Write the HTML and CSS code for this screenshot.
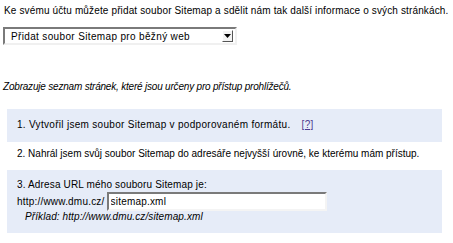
FILE: index.html
```html
<!DOCTYPE html>
<html>
<head>
<meta charset="utf-8">
<link rel="stylesheet" href="styles.css">
</head>
<body>
<p class="intro">Ke svému účtu můžete přidat soubor Sitemap a sdělit nám tak další informace o svých stránkách.</p>
<div class="select-wrap">
  <select class="select">
    <option>Přidat soubor Sitemap pro běžný web</option>
  </select>
  <span class="select-btn"><svg width="7" height="4" viewBox="0 0 7 4"><path d="M0 0H7L3.5 4Z" fill="#000"/></svg></span>
</div>
<p class="desc">Zobrazuje seznam stránek, které jsou určeny pro přístup prohlížečů.</p>
<div class="steps">
  <div class="step step-blue step-first">1. Vytvořil jsem soubor Sitemap v podporovaném formátu. <a class="help" href="#">[?]</a></div>
  <div class="step step-white">2. Nahrál jsem svůj soubor Sitemap do adresáře nejvyšší úrovně, ke kterému mám přístup.</div>
  <div class="step step-blue step-last">
    <div class="step-title">3. Adresa URL mého souboru Sitemap je:</div>
    <div class="url-row"><span class="url-prefix">http://www.dmu.cz/</span><input class="url-input" type="text" value="sitemap.xml"></div>
    <div class="example">Příklad: http://www.dmu.cz/sitemap.xml</div>
  </div>
</div>
</body>
</html>
```
FILE: styles.css
```css
html, body {
  margin: 0;
  padding: 0;
  background: #fff;
}
body {
  font-family: "Liberation Sans", Arial, sans-serif;
  font-size: 10px;
  color: #000;
  padding: 4px 0 0 4px;
  white-space: nowrap;
}
.intro {
  margin: 0;
  line-height: 14px;
  letter-spacing: 0.14px;
}
.select-wrap {
  position: relative;
  width: 234px;
  height: 18px;
  margin: 9px 0 0 -1px;
}
.select {
  appearance: none;
  -webkit-appearance: none;
  display: block;
  width: 234px;
  height: 18px;
  margin: 0;
  padding: 0 0 0 6px;
  font-family: "Liberation Sans", Arial, sans-serif;
  font-size: 10px;
  letter-spacing: 0.35px;
  color: #000;
  background: #fff;
  border: 2px solid;
  border-color: #7a7a7a #f0f0f0 #f0f0f0 #7a7a7a;
  border-radius: 0;
  outline: none;
}
.select-btn {
  position: absolute;
  right: 4px;
  top: 3px;
  width: 11px;
  height: 12px;
  box-sizing: border-box;
  background: #f3f3f3;
  border: 1px solid;
  border-color: #fff #555 #555 #fff;
  display: flex;
  align-items: center;
  justify-content: center;
}
.select-btn svg {
  display: block;
}
.desc {
  margin: 35px 0 0 -1px;
  font-style: italic;
  line-height: 14px;
  letter-spacing: -0.2px;
}
.steps {
  margin: 15px 0 0 3px;
  width: 435px;
}
.step {
  padding: 0 10px;
  line-height: 14px;
}
.step-blue {
  background: #e6ecf8;
}
.step-white {
  background: #fff;
}
.step-first {
  padding-top: 9px;
  padding-bottom: 10px;
  letter-spacing: 0.3px;
}
.step-white {
  padding-top: 5px;
  padding-bottom: 9px;
}
.step-last {
  padding-top: 8px;
  padding-bottom: 10px;
}
.step-title {
  letter-spacing: 0.15px;
}
.help {
  color: #4c3a8f;
  margin-left: 8px;
}
.url-row {
  display: flex;
  align-items: center;
  margin-top: 0;
}
.url-prefix {
  letter-spacing: 0.2px;
}
.url-input {
  width: 220px;
  height: 19px;
  box-sizing: border-box;
  margin: 0 0 0 2px;
  padding: 0 2px;
  font-family: "Liberation Sans", Arial, sans-serif;
  font-size: 10px;
  letter-spacing: 0.2px;
  border: 2px solid;
  border-color: #7a7a7a #f4f4f4 #f4f4f4 #7a7a7a;
  background: #fff;
  outline: none;
}
.example {
  font-style: italic;
  padding-left: 8px;
  line-height: 12px;
  letter-spacing: 0.1px;
}
```
